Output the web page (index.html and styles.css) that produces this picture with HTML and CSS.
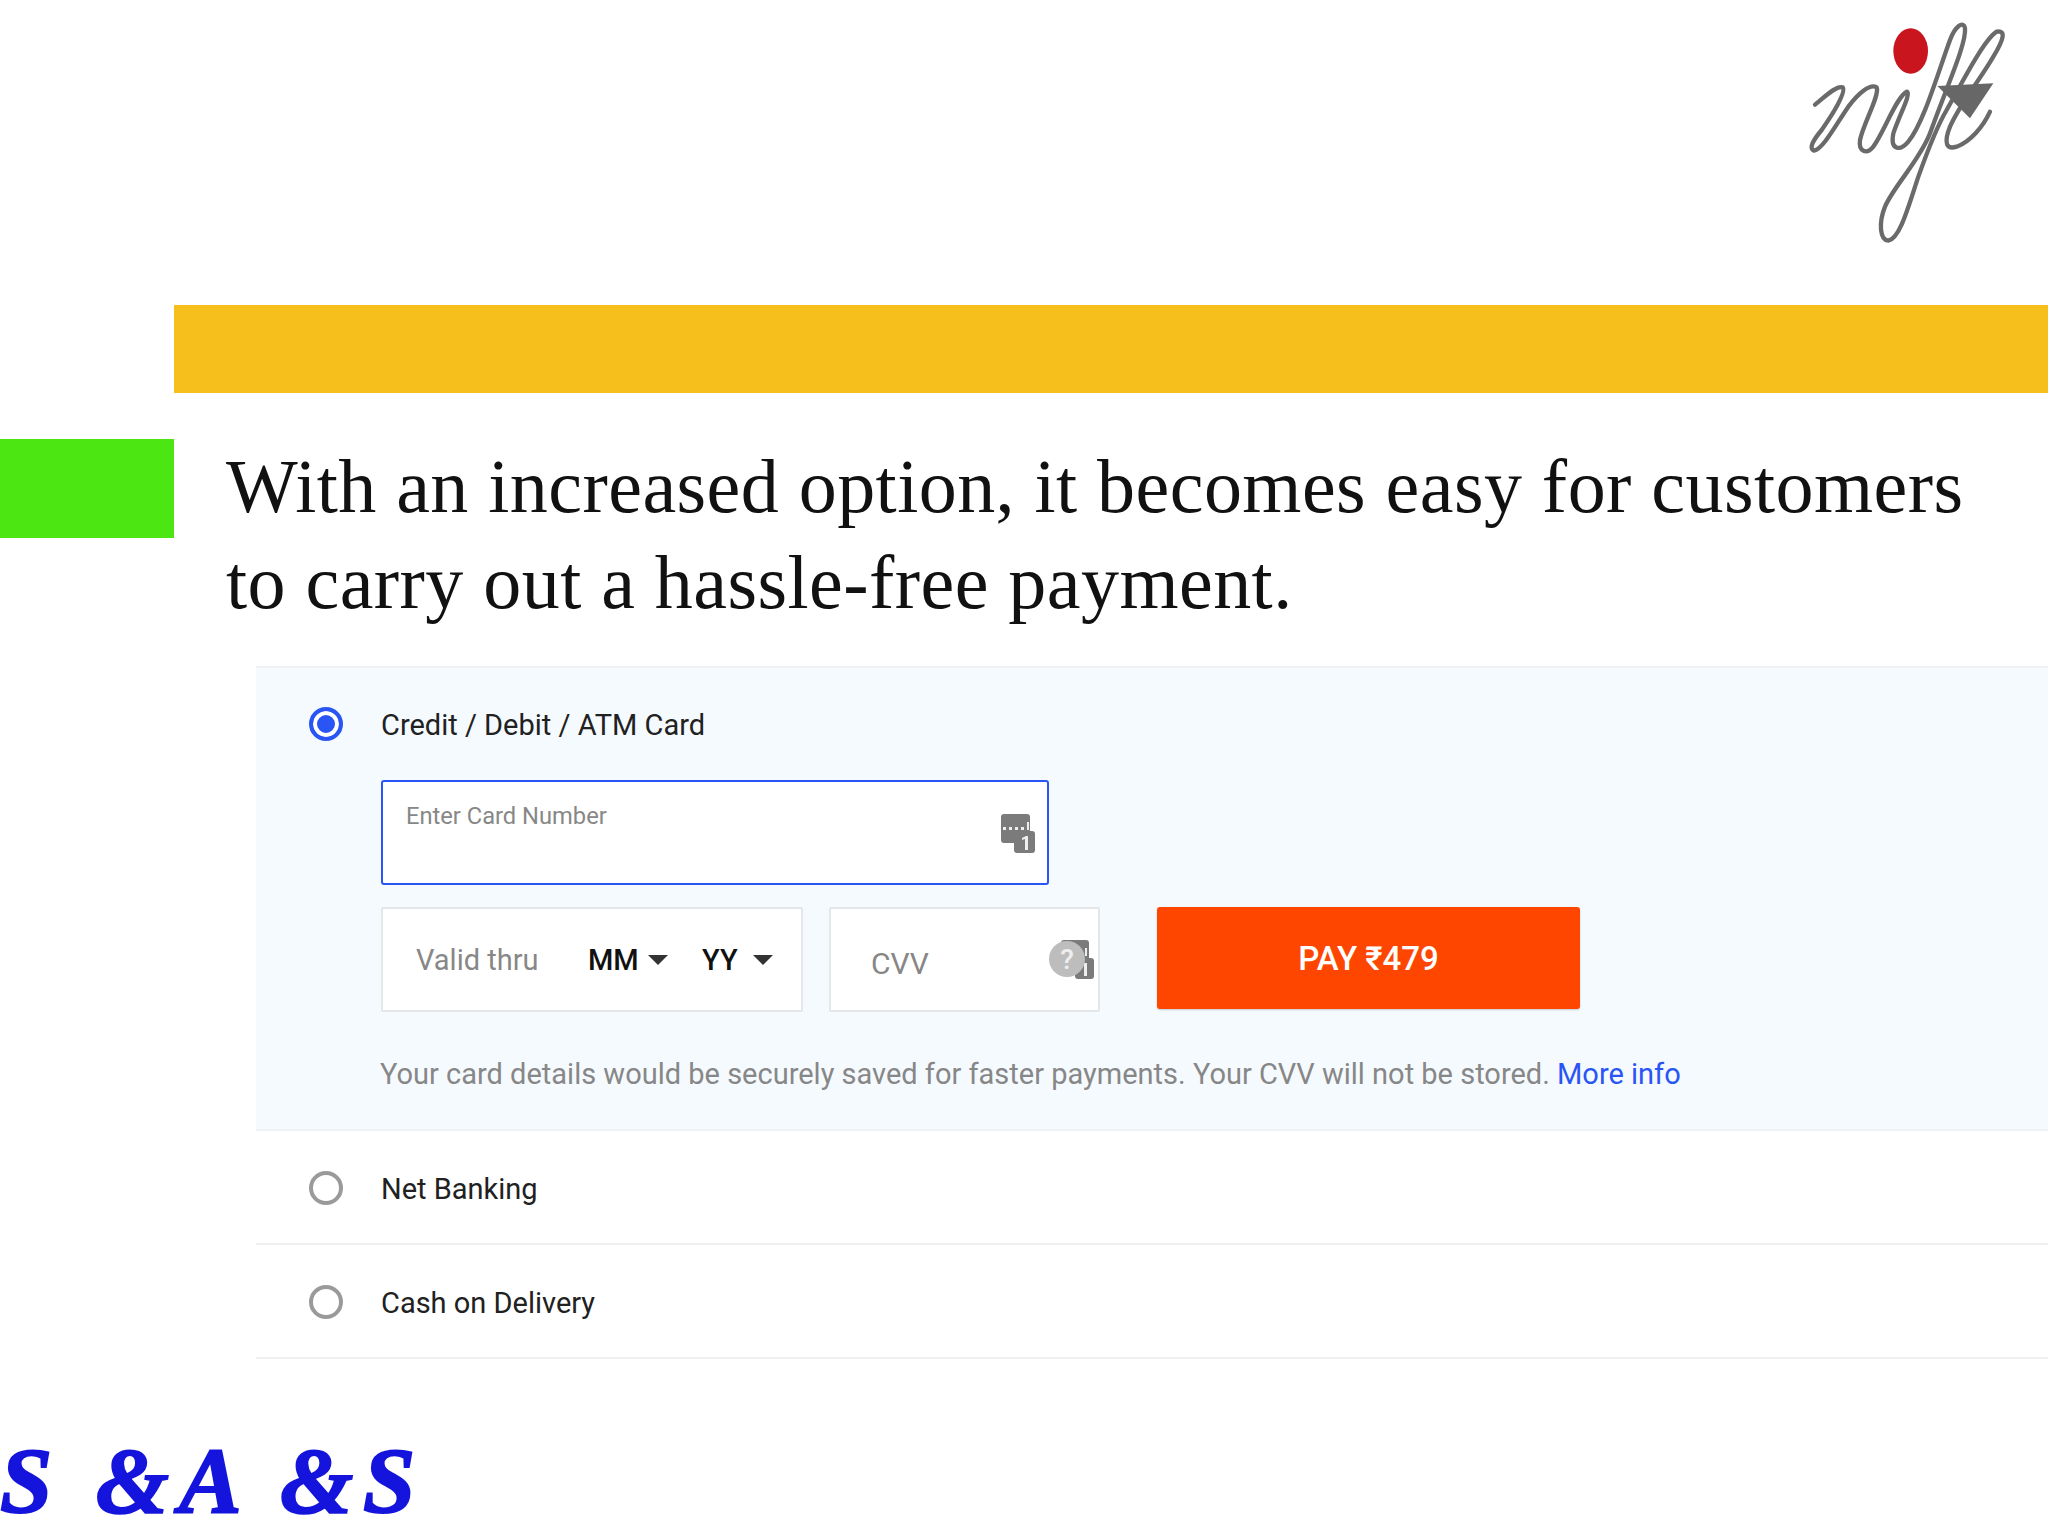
FILE: index.html
```html
<!DOCTYPE html>
<html lang="en">
<head>
<meta charset="utf-8">
<title>Payment options</title>
<link rel="stylesheet" href="styles.css">
</head>
<body>
<div class="slide">
  <header class="top">
    <svg class="nift" viewBox="0 0 804 780" aria-label="NIFT logo">
      <path class="nift-line" d="M105,314 C135,290 170,255 188,262 C200,275 160,340 125,390 C100,420 85,445 102,452 C130,447 170,370 205,320 C235,280 270,250 290,262 C300,285 250,370 240,420 C235,455 260,465 280,440 C310,400 350,290 380,275 C395,280 360,340 340,400 C330,450 360,455 385,425 C430,370 470,230 510,120 C525,80 550,60 555,85 C560,130 500,260 450,400 C420,480 340,560 315,620 C295,670 300,720 325,722 C360,715 385,620 415,530 C440,460 470,380 500,330 C540,260 610,120 650,95 C680,90 670,120 640,170 C600,240 540,310 510,380 C490,430 500,450 530,440 C570,425 610,380 630,335"/>
      <ellipse class="nift-dot" cx="392" cy="153" rx="52" ry="68"/>
      <polygon class="nift-arrow" points="472,258 640,250 570,355"/>
    </svg>
  </header>
  <div class="band"></div>
  <section class="intro">
    <div class="marker"></div>
    <h1 class="headline">With an increased option, it becomes easy for customers<br>to carry out a hassle-free payment.</h1>
  </section>
  <section class="payment">
    <div class="option option-open">
      <div class="option-head">
        <span class="radio radio-on"></span>
        <span class="option-label">Credit / Debit / ATM Card</span>
      </div>
      <div class="card-field">
        <span class="card-hint">Enter Card Number</span>
        <svg class="card-icon" viewBox="0 0 34 39">
          <rect class="ic-dark" x="0" y="0" width="29" height="29" rx="3"/>
          <rect class="ic-dark" x="13" y="17" width="21" height="22" rx="3"/>
          <path class="ic-light" d="M2 13h3v3H2zM8 13h3v3H8zM14 13h3v3h-3zM20 13h3v3h-3zM26 8h2v8h-2z"/>
          <path class="ic-light" d="M21 24l4-2h2v14h-3V25l-3 1z"/>
        </svg>
      </div>
      <div class="form-row">
        <div class="valid-box">
          <span class="valid-label">Valid thru</span>
          <span class="select select-mm">MM<i class="caret"></i></span>
          <span class="select select-yy">YY<i class="caret"></i></span>
        </div>
        <div class="cvv-box">
          <span class="cvv-label">CVV</span>
          <svg class="cvv-icon" viewBox="0 0 46 39">
            <rect class="ic-dark" x="12" y="0" width="28" height="30" rx="3"/>
            <rect class="ic-dark" x="26" y="18" width="19" height="21" rx="3"/>
            <path class="ic-light" d="M36 8h2v8h-2zM35 23h3v13h-3z"/>
            <circle class="ic-grey" cx="18" cy="19" r="18"/>
            <text class="ic-q" x="18" y="29">?</text>
          </svg>
        </div>
        <button class="pay">PAY ₹479</button>
      </div>
      <p class="note">Your card details would be securely saved for faster payments. Your CVV will not be stored. <a class="more">More info</a></p>
    </div>
    <div class="option option-row">
      <span class="radio"></span>
      <span class="option-label">Net Banking</span>
    </div>
    <div class="option option-row">
      <span class="radio"></span>
      <span class="option-label">Cash on Delivery</span>
    </div>
  </section>
  <footer class="brand"><span class="brand-text">S &amp;A &amp;S</span></footer>
</div>
</body>
</html>
```

FILE: styles.css
```css
* { box-sizing: border-box; }
html, body { margin: 0; padding: 0; background: #fff; }
.slide { width: 2048px; height: 1536px; overflow: hidden; display: flex; flex-direction: column; background: #fff; font-family: Roboto, "Liberation Sans", sans-serif; }

.top { height: 305px; flex: none; display: flex; justify-content: flex-end; align-items: flex-start; }
.nift { width: 268px; height: 260px; display: block; }
.nift-line { fill: none; stroke: #6a6a6a; stroke-width: 13; stroke-linecap: round; stroke-linejoin: round; }
.nift-dot { fill: #c9151e; }
.nift-arrow { fill: #676767; }

.band { height: 88px; flex: none; margin-left: 174px; background: #f6bf1c; }

.intro { display: flex; flex: none; height: 238px; }
.marker { width: 174px; height: 99px; margin-top: 46px; flex: none; background: #4ce712; }
.headline { margin: 45px 0 0 52px; font-family: "Liberation Serif", serif; font-weight: 400; font-size: 76px; line-height: 96px; color: #111; white-space: nowrap; letter-spacing: 0.45px; }

.payment { margin-left: 256px; margin-top: 35px; flex: none; }
.option-open { height: 465px; padding: 0 0 0 53px; background: #f5faff; border-top: 2px solid #eef2f4; border-bottom: 2px solid #eef2f2; }
.option-head { display: flex; align-items: center; height: 34px; margin-top: 39px; }
.radio { width: 34px; height: 34px; flex: none; border-radius: 50%; border: 4px solid #9a9a9a; background: #fff; }
.radio-on { border-color: #2a55f5; background: #2a55f5; box-shadow: inset 0 0 0 4px #fff; }
.option-label { margin: 1px 0 0 38px; font-size: 29px; color: #212121; }

.card-field { position: relative; margin: 39px 0 0 72px; width: 668px; height: 105px; background: #fff; border: 2px solid #2a55f5; border-radius: 3px; padding: 20px 0 0 23px; }
.card-hint { font-size: 23.7px; color: #878787; }
.card-icon { position: absolute; left: 618px; top: 32px; width: 34px; height: 39px; }
.ic-dark { fill: #7b7b7b; }
.ic-light { fill: #eee; }
.ic-grey { fill: #bdbdbd; }
.ic-q { fill: #eee; font-size: 28px; font-weight: 500; font-family: Roboto, sans-serif; text-anchor: middle; }

.form-row { display: flex; margin: 22px 0 0 72px; align-items: flex-start; }
.valid-box { width: 422px; height: 105px; background: #fff; border: 2px solid #e4e7ea; border-radius: 2px; display: flex; align-items: center; padding-left: 33px; }
.valid-label { font-size: 29px; color: #878787; width: 172px; }
.select { font-size: 29px; font-weight: 500; color: #111; display: flex; align-items: center; }
.select-mm { width: 114px; }
.caret { display: inline-block; margin-left: 9px; width: 0; height: 0; border-left: 10px solid transparent; border-right: 10px solid transparent; border-top: 10px solid #333; }
.select-yy .caret { margin-left: 15px; }
.cvv-box { position: relative; width: 271px; height: 105px; margin-left: 26px; background: #fff; border: 2px solid #e4e7ea; border-radius: 2px; padding: 37px 0 0 40px; }
.cvv-label { font-size: 30px; color: #878787; }
.cvv-icon { position: absolute; left: 218px; top: 31px; width: 46px; height: 39px; }
.pay { width: 423px; height: 102px; margin-left: 57px; border: 0; border-radius: 3px; background: #ff4600; color: #fff; font: 500 33px Roboto, sans-serif; box-shadow: 0 1px 2px rgba(0,0,0,.2); }

.note { margin: 44px 0 0 71px; font-size: 29px; line-height: 36px; color: #878787; white-space: nowrap; }
.more { color: #2a55f5; }

.option-row { height: 114px; display: flex; align-items: center; padding: 2px 0 0 53px; border-bottom: 2px solid #eef0f1; }

.brand { margin-top: 46px; height: 110px; position: relative; }
.brand-text { position: absolute; left: 0; top: 20px; font-family: "Liberation Serif", serif; font-style: italic; font-weight: 700; font-size: 94px; line-height: 110px; letter-spacing: 10px; color: #1414dc; white-space: nowrap; -webkit-text-stroke: 2px #1414dc; }
```
